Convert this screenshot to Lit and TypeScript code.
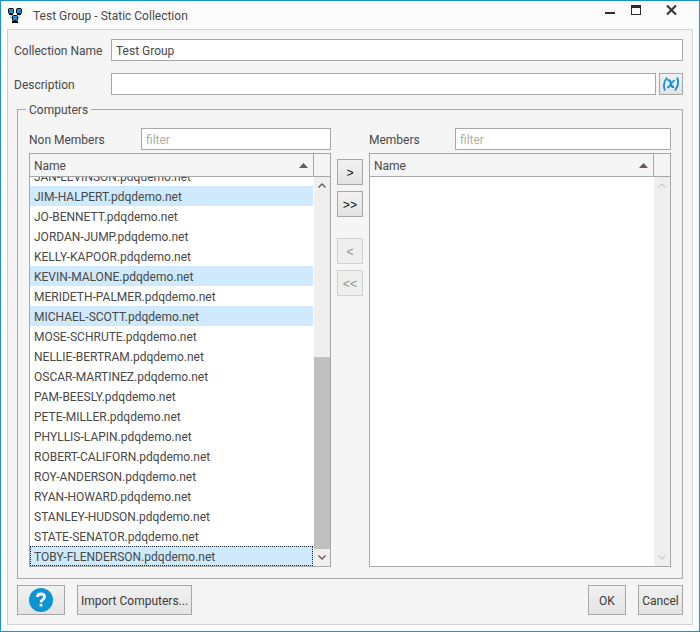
import { LitElement, html, css, nothing } from "lit";
import { customElement, property } from "lit/decorators.js";

const COMPUTERS: [string, boolean][] = [
  ["JAN-LEVINSON", false],
  ["JIM-HALPERT", true],
  ["JO-BENNETT", false],
  ["JORDAN-JUMP", false],
  ["KELLY-KAPOOR", false],
  ["KEVIN-MALONE", true],
  ["MERIDETH-PALMER", false],
  ["MICHAEL-SCOTT", true],
  ["MOSE-SCHRUTE", false],
  ["NELLIE-BERTRAM", false],
  ["OSCAR-MARTINEZ", false],
  ["PAM-BEESLY", false],
  ["PETE-MILLER", false],
  ["PHYLLIS-LAPIN", false],
  ["ROBERT-CALIFORN", false],
  ["ROY-ANDERSON", false],
  ["RYAN-HOWARD", false],
  ["STANLEY-HUDSON", false],
  ["STATE-SENATOR", false],
  ["TOBY-FLENDERSON", true],
];

const shared = css`
  * { box-sizing: border-box; }
  input {
    font: inherit;
    color: #484848;
    height: 22px;
    min-width: 0;
    padding: 1px 4px 0;
    border: 1px solid #a8a8a8;
    border-radius: 0;
    background: #fff;
    outline: none;
  }
  input::placeholder { color: #abb2a4; opacity: 1; }
  label { padding-top: 1px; }
  svg { display: block; }
`;

@customElement("computer-list")
export class ComputerList extends LitElement {
  @property() label = "";
  @property({ attribute: false }) rows: [string, boolean][] = [];

  static styles = [shared, css`
    :host { display: flex; flex-direction: column; flex: 1 1 0; min-width: 0; gap: 3px; }
    .filter { display: flex; align-items: center; }
    .filter label { width: var(--label-width, 112px); flex: none; }
    .filter input { flex: 1; }
    .box { flex: 1; display: flex; border: 1px solid #a8a8a8; background: #fff; }
    table { flex: 1; min-width: 0; display: flex; flex-direction: column; }
    thead { display: block; flex: none; background: #f5f5f5; border-bottom: 1px solid #a8a8a8; }
    tr { display: flex; align-items: center; }
    th { flex: 1; display: flex; justify-content: space-between; align-items: center;
      height: 22px; padding: 0 5px 0 4px; line-height: 22px; font-weight: 400; text-align: left; }
    th span { padding-top: 2px; }
    tbody { flex: 1; display: block; overflow: hidden; }
    /* the list is scrolled to its end, so the top row is partly hidden */
    tbody tr:first-child { margin-top: -11px; }
    td { flex: 1; height: 20px; padding: 1px 4px 0; line-height: 20px; white-space: nowrap; }
    .selected { background: #cfe9fd; }
    .focused { outline: 1px dotted #10202c; outline-offset: -1px; }
    .side { width: 17px; flex: none; display: flex; flex-direction: column; }
    .corner { height: 23px; background: #f5f5f5; border-left: 1px solid #a8a8a8; border-bottom: 1px solid #a8a8a8; }
    .bar { flex: 1; margin-left: 1px; background: #efefef; display: flex; flex-direction: column; align-items: center; }
    .arrow { height: 17px; display: flex; align-items: center; flex: none; color: #6b5560; }
    .track { flex: 1; width: 100%; display: grid; grid-template-rows: 46fr 54fr; }
    .thumb { grid-row: 2; background: #c0c0c0; }
    .off .arrow { color: #d0d0d0; }
  `];

  render() {
    const n = this.rows.length;
    return html`
      <div class="filter">
        <label for="f">${this.label}</label>
        <input id="f" type="text" placeholder="filter">
      </div>
      <div class="box">
        <table aria-label=${this.label}>
          <thead><tr><th scope="col"><span>Name</span>
            <svg width="9" height="5" viewBox="0 0 9 5" aria-hidden="true"><path d="M4.5 0 9 5H0z" fill="#6b5560"/></svg>
          </th></tr></thead>
          <tbody>${this.rows.map(([name, sel], i) => html`
            <tr class="${sel ? "selected" : ""} ${i === n - 1 ? "focused" : ""}"><td>${name}.pdqdemo.net</td></tr>`)}
          </tbody>
        </table>
        <div class="side" aria-hidden="true">
          <div class="corner"></div>
          <div class="bar ${n ? "" : "off"}">
            <div class="arrow"><svg width="8" height="5" viewBox="0 0 8 5"><path d="M.5 4.5 4 1l3.500 3.500" fill="none" stroke="currentColor" stroke-width="1.400"/></svg></div>
            <div class="track">${n ? html`<div class="thumb"></div>` : nothing}</div>
            <div class="arrow"><svg width="8" height="5" viewBox="0 0 8 5"><path d="M.5.500 4 4 7.500.500" fill="none" stroke="currentColor" stroke-width="1.400"/></svg></div>
          </div>
        </div>
      </div>`;
  }
}

@customElement("app-root")
export class AppRoot extends LitElement {
  static styles = [shared, css`
    :host {
      display: flex; flex-direction: column; box-sizing: border-box; min-height: 100vh;
      padding: 0 6px 6px; border: 1px solid #1a93d1; background: #fcfcfc; color: #484848;
      font: 12px/16px Roboto, "Open Sans", sans-serif;
    }
    .title { display: flex; align-items: center; height: 28px; flex: none; }
    .title h1 { flex: 1; margin: 0 0 0 10px; padding-top: 1px; font-size: 12px; line-height: 16px; font-weight: 400; }
    .title button { padding: 0; border: 0; background: none; }
    .controls { display: flex; align-self: flex-start; gap: 15px; padding: 3px 16px 0 0; }
    .controls .close { margin-left: 9px; }
    .panel { flex: 1; display: flex; flex-direction: column; padding: 9px; border: 1px solid #d2d2d2; background: #f5f5f5; }
    .field { display: flex; align-items: center; margin: 0 0 12px -3px; }
    .field label { width: 97px; flex: none; }
    .field input { flex: 1; }
    .field.last { margin-bottom: 6px; }
    .btn {
      font: inherit; color: #3a3a3a; padding: 0; border: 1px solid #a8a8a8; border-radius: 0;
      background: linear-gradient(#f1f1f1, #e3e3e3); display: flex; align-items: center; justify-content: center;
    }
    .btn:disabled { border-color: #d0d0d0; background: #efefef; }
    .var { width: 24px; height: 22px; margin-left: 3px; }
    fieldset { flex: 1; min-width: 0; display: flex; gap: 6px; margin: 0; padding: 11px; border: 1px solid #a8a8a8; }
    legend { margin-left: -3px; padding: 1px 3px 0; height: 16px; }
    .right { --label-width: 86px; }
    .moves { display: flex; flex-direction: column; gap: 6px; padding-top: 31px; width: 26px; flex: none; }
    .moves .btn { height: 26px; flex: none; padding-top: 4px; color: #101010; font: 12px/16px "Liberation Mono", monospace; }
    .moves .btn:disabled { color: #8a8f8a; }
    .moves .gap { margin-top: 15px; }
    .footer { display: flex; gap: 12px; margin-top: 6px; }
    .footer .btn { height: 30px; padding-top: 1px; }
    .footer .help { width: 48px; padding: 0; }
    .import { width: 115px; }
    .ok { width: 38px; margin-left: auto; }
    .cancel { width: 45px; }
  `];

  render() {
    return html`
      <header class="title">
        <svg width="16" height="16" viewBox="0 0 16 16" aria-hidden="true">
          <path d="M4 8v3h2M12 8v3h-2" fill="none" stroke="#9a9a9a"/>
          <path d="M2 6h4v2H2zM10 6h4v2h-4zM7 13h2v1h2v2H5v-2h2z" fill="#000"/>
          <rect x="1.500" y="1.500" width="5" height="5" rx="1" fill="#0b93d3" stroke="#000"/>
          <rect x="9.500" y="1.500" width="5" height="5" rx="1" fill="#0b93d3" stroke="#000"/>
          <rect x="5.500" y="8.500" width="5" height="5" rx="1" fill="#0b93d3" stroke="#000"/>
        </svg>
        <h1>Test Group - Static Collection</h1>
        <div class="controls">
          <button aria-label="Minimize"><svg width="11" height="12" viewBox="0 0 11 12"><path d="M0 8h10v2H0z" fill="#2b2b2b"/></svg></button>
          <button aria-label="Maximize"><svg width="11" height="12" viewBox="0 0 11 12"><path d="M0 1h10v10H0zM1 4v6h8V4z" fill="#2b2b2b" fill-rule="evenodd"/></svg></button>
          <button class="close" aria-label="Close"><svg width="11" height="12" viewBox="0 0 11 12"><path d="m1 1.500 9 9m0-9-9 9" stroke="#3a3a3a" stroke-width="2.200"/></svg></button>
        </div>
      </header>
      <main class="panel">
        <div class="field"><label for="name">Collection Name</label><input id="name" type="text" value="Test Group"></div>
        <div class="field last"><label for="desc">Description</label><input id="desc" type="text">
          <button class="btn var" aria-label="Insert variable">
            <svg width="18" height="16" viewBox="0 0 18 16" fill="none" stroke="#0b93d3"><path stroke-width="1.800" d="M5 1.500Q0 8 3 14.500M15 1.500q3 6.500-2 13"/><path stroke-width="2.200" d="M5.500 4.500q2.500-1 3 1.500l1 4q.5 1.500 2.500.500"/><path stroke-width="1.600" d="M13 4.500q-2 0-4 3.500t-4 3.500"/></svg>
          </button>
        </div>
        <fieldset>
          <legend>Computers</legend>
          <computer-list label="Non Members" .rows=${COMPUTERS}></computer-list>
          <div class="moves">
            <button class="btn">&gt;</button>
            <button class="btn">&gt;&gt;</button>
            <button class="btn gap" disabled>&lt;</button>
            <button class="btn" disabled>&lt;&lt;</button>
          </div>
          <computer-list class="right" label="Members" .rows=${[]}></computer-list>
        </fieldset>
        <footer class="footer">
          <button class="btn help" aria-label="Help">
            <svg width="24" height="24" viewBox="0 0 24 24"><circle cx="12" cy="12" r="12" fill="#0b93d3"/><path d="M8.500 9q0-3 3.500-3T15.500 9q0 1.500-1.800 2.600T12 14.500M12 16v2.500" fill="none" stroke="#fff" stroke-width="2.800"/></svg>
          </button>
          <button class="btn import">Import Computers...</button>
          <button class="btn ok">OK</button>
          <button class="btn cancel">Cancel</button>
        </footer>
      </main>`;
  }
}
